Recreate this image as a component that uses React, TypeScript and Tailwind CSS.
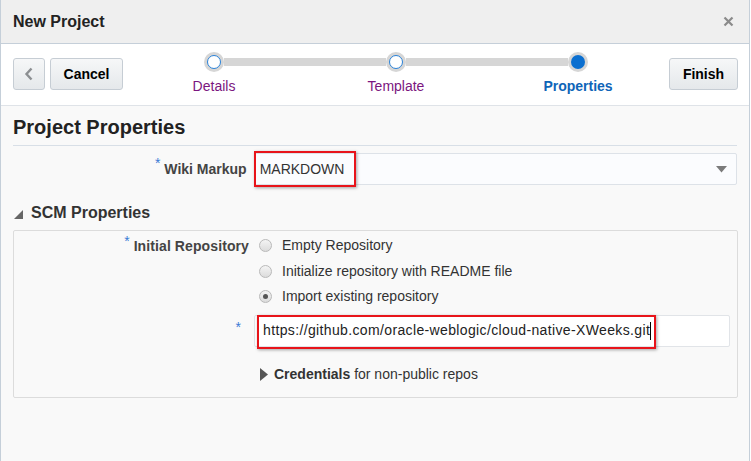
import React from "react";

const font = { fontFamily: '"Liberation Sans", Arial, sans-serif' };

function Step({ label, state, left, right }: { label: string; state: "done" | "active"; left: boolean; right: boolean }) {
  return (
    <div className="flex w-[182px] flex-col items-center">
      <div className="flex h-[20px] w-full items-center">
        <div className={`h-[8px] flex-1 ${left ? "bg-[#d6d6d6]" : ""}`} />
        <div className="flex h-[20px] w-[20px] items-center justify-center rounded-full bg-[#d6d6d6]">
          {state === "active" ? (
            <div className="h-[14px] w-[14px] rounded-full bg-[#0b6fd0]" />
          ) : (
            <div className="h-[14px] w-[14px] rounded-full border border-[#2a82d8] bg-white" />
          )}
        </div>
        <div className={`h-[8px] flex-1 ${right ? "bg-[#d6d6d6]" : ""}`} />
      </div>
      <div
        className={`mt-[6px] text-[14px] leading-[16px] ${
          state === "active" ? "font-bold text-[#0f65b8]" : "text-[#7b1680]"
        }`}
      >
        {label}
      </div>
    </div>
  );
}

function Radio({ checked }: { checked?: boolean }) {
  return (
    <div className="flex h-[13px] w-[13px] items-center justify-center rounded-full border border-[#b9b9b9] bg-gradient-to-b from-[#f4f4f4] to-[#dcdcdc]">
      {checked && <div className="h-[5px] w-[5px] rounded-full bg-[#555]" />}
    </div>
  );
}

const btn =
  "flex h-[32px] items-center justify-center rounded-[3px] border border-[#c6cdd4] bg-gradient-to-b from-[#f6f7f8] to-[#e5e8eb] text-[14px] font-bold text-black";

export default function App() {
  return (
    <div style={font} className="relative h-[461px] w-[751px] overflow-hidden bg-white">
      <div className="flex h-full w-[750px] flex-col border-x border-[#c5cfd9] bg-[#f9f9f9]">
        {/* Header */}
        <div className="flex h-[44px] items-center justify-between border-b border-[#c5cfd9] bg-[#efefef] pl-[12px] pr-[15px]">
          <div className="text-[16px] font-bold text-[#222]">New Project</div>
          <svg width="11" height="11" viewBox="0 0 11 11">
            <path d="M1.5 1.5 L9.5 9.5 M9.5 1.5 L1.5 9.5" stroke="#8a8a8a" strokeWidth="2.2" />
          </svg>
        </div>
        {/* Toolbar */}
        <div className="flex h-[62px] items-start border-b border-[#dfe3e8] bg-white pl-[12px]">
          <div className="mt-[14px] flex gap-[5px]">
            <div className={`${btn} w-[32px]`}>
              <svg width="10" height="14" viewBox="0 0 10 14">
                <path d="M7.5 1.5 L2.5 7 L7.5 12.5" fill="none" stroke="#8c8f92" strokeWidth="2.4" />
              </svg>
            </div>
            <div className={`${btn} w-[73px]`}>Cancel</div>
          </div>
          <div className="mt-[8px] flex">
            <Step label="Details" state="done" left={false} right />
            <Step label="Template" state="done" left right />
            <Step label="Properties" state="active" left right={false} />
          </div>
          <div className={`${btn} mt-[14px] w-[69px]`}>Finish</div>
        </div>
        {/* Content */}
        <div className="flex flex-col px-[12px]">
          <div className="mt-[9px] text-[20px] font-bold leading-[24px] text-[#222]">Project Properties</div>
          <div className="mt-[6px] h-px w-[724px] bg-[#d8dfe7]" />
          <div className="mt-[7px] flex h-[32px] items-center">
            <div className="flex w-[241px] items-center justify-end pr-[7px]">
              <span className="relative -top-[6px] mr-[4px] text-[14px] text-[#3a7bd5]">*</span>
              <span className="text-[14px] font-bold text-[#444]">Wiki Markup</span>
            </div>
            <div className="relative flex h-[32px] w-[484px] items-center justify-between rounded-[2px] border border-[#dde2e8] bg-[#fbfcfe] pl-[5px] pr-[9px]">
              <span className="text-[14px] text-[#333]">MARKDOWN</span>
              <svg width="11" height="7" viewBox="0 0 11 7">
                <path d="M0 0 H11 L5.5 6.5 Z" fill="#7b7b7b" />
              </svg>
              <div className="absolute -left-px -top-[3px] h-[36px] w-[102px] border-2 border-[#e8141a] shadow-[1px_1px_3px_rgba(0,0,0,0.35)]" />
            </div>
          </div>
          <div className="mt-[18px] flex h-[20px] items-center">
            <svg width="11" height="11" viewBox="0 0 11 11" className="mr-[7px] mt-[2px]">
              <path d="M10 1 V10 H1 Z" fill="#666" />
            </svg>
            <span className="text-[16px] font-bold text-[#333]">SCM Properties</span>
          </div>
          <div className="mt-[7px] h-[168px] w-[725px] rounded-[2px] border border-[#dcdcdc] bg-[#f9f9f9]">
            <div className="mt-[2px] flex">
              <div className="flex w-[245px] items-start justify-end pr-[10px] pt-[3px]">
                <span className="relative -top-[5px] mr-[4px] text-[14px] text-[#3a7bd5]">*</span>
                <span className="text-[14px] font-bold tracking-[0.1px] text-[#444]">Initial Repository</span>
              </div>
              <div className="flex flex-col">
                {[
                  ["Empty Repository", false],
                  ["Initialize repository with README file", false],
                  ["Import existing repository", true],
                ].map(([t, c]) => (
                  <div key={t as string} className="flex h-[25.5px] items-center">
                    <div className="mr-[10px]">
                      <Radio checked={c as boolean} />
                    </div>
                    <span className="text-[14px] text-[#333]">{t as string}</span>
                  </div>
                ))}
              </div>
            </div>
            <div className="mt-[5px] flex">
              <div className="flex w-[240px] justify-end pr-[13px] pt-[2px]">
                <span className="text-[14px] text-[#3a7bd5]">*</span>
              </div>
              <div className="relative flex h-[32px] w-[476px] items-center rounded-[2px] border border-[#e1e4e8] bg-white pl-[8px]">
                <span className="text-[14px] tracking-[0.36px] text-[#222]">https://github.com/oracle-weblogic/cloud-native-XWeeks.git</span>
                <span className="h-[18px] w-px bg-black" />
                <div className="absolute left-[2px] -top-px h-[34px] w-[399px] border-2 border-[#e8141a] shadow-[1px_1px_3px_rgba(0,0,0,0.35)]" />
              </div>
            </div>
            <div className="mt-[17px] flex items-center pl-[246px]">
              <svg width="8" height="13" viewBox="0 0 8 13" className="mr-[6px]">
                <path d="M0 0 L8 6.5 L0 13 Z" fill="#555" />
              </svg>
              <span className="text-[14px] text-[#333]">
                <b>Credentials</b> for non-public repos
              </span>
            </div>
          </div>
        </div>
      </div>
    </div>
  );
}
